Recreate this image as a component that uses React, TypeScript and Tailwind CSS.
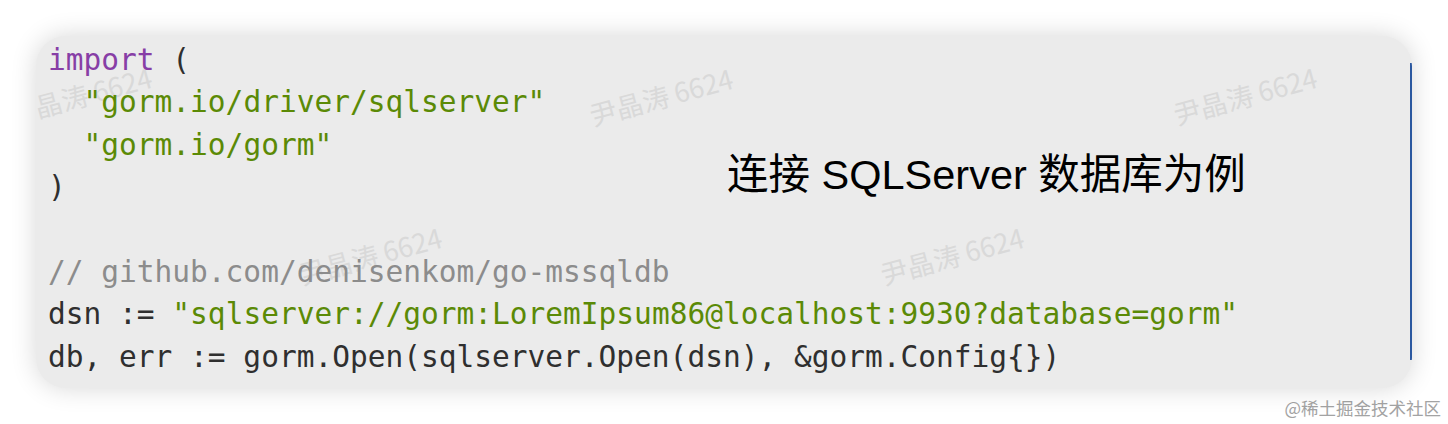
import React from "react";

const mono = { fontFamily: '"DejaVu Sans Mono", "Liberation Mono", monospace' };

const Watermark: React.FC<{ className: string }> = ({ className }) => (
  <span
    className={`pointer-events-none absolute -translate-x-1/2 -translate-y-1/2 -rotate-[15deg] whitespace-nowrap text-[27px] leading-none text-[#d9d9d9] ${className}`}
    style={{ fontFamily: '"Noto Sans CJK SC", "Noto Sans", sans-serif' }}
  >
    尹晶涛 6624
  </span>
);

const App: React.FC = () => {
  return (
    <div className="flex h-[424px] w-[1448px] flex-col bg-white pl-[36px] pt-[36px]">
      {/* Code card */}
      <div className="relative h-[352px] w-[1376px] overflow-hidden rounded-[30px] bg-[#ebebeb] shadow-[0_0_26px_rgba(0,0,0,0.16)]">
        {/* watermarks */}
        <Watermark className="left-[44px] top-[59px]" />
        <Watermark className="left-[625px] top-[60px]" />
        <Watermark className="left-[1209px] top-[59px]" />
        <Watermark className="left-[334px] top-[219px]" />
        <Watermark className="left-[916px] top-[219px]" />
        <Watermark className="left-[44px] top-[379px]" />
        <Watermark className="left-[625px] top-[379px]" />
        <Watermark className="left-[1209px] top-[379px]" />

        <div className="relative grid">
          <pre
            className="col-start-1 row-start-1 pl-[12px] pt-[3px] text-[29.5px] leading-[42.4px] text-[#2f2f2f]"
            style={mono}
          >
            <span className="text-[#873ea6]">import</span> (
            {"\n"}
            {"  "}
            <span className="text-[#5b8a06]">"gorm.io/driver/sqlserver"</span>
            {"\n"}
            {"  "}
            <span className="text-[#5b8a06]">"gorm.io/gorm"</span>
            {"\n"})
            {"\n\n"}
            <span className="text-[#8c8c8c]">// github.com/denisenkom/go-mssqldb</span>
            {"\n"}dsn :={" "}
            <span className="text-[#5b8a06]">
              "sqlserver://gorm:LoremIpsum86@localhost:9930?database=gorm"
            </span>
            {"\n"}db, err := gorm.Open(sqlserver.Open(dsn), &amp;gorm.Config{"{}"})
          </pre>

          {/* caption */}
          <div
            className="col-start-1 row-start-1 ml-[691px] mt-[114px] self-start text-[41.5px] leading-[50px] text-black"
            style={{ fontFamily: '"Liberation Sans", "Noto Sans CJK SC", sans-serif' }}
          >
            连接 SQLServer 数据库为例
          </div>
        </div>

        {/* right edge line */}
        <div className="absolute bottom-[28px] right-0 top-[27px] w-[2px] bg-[#2b58a0]" />
      </div>

      {/* footer */}
      <div
        className="mt-[10px] flex justify-end pr-[7px] text-[17.5px] leading-[20px] text-[#a3a3a3]"
        style={{ fontFamily: '"Noto Sans CJK SC", "Noto Sans", sans-serif' }}
      >
        @稀土掘金技术社区
      </div>
    </div>
  );
};

export default App;
